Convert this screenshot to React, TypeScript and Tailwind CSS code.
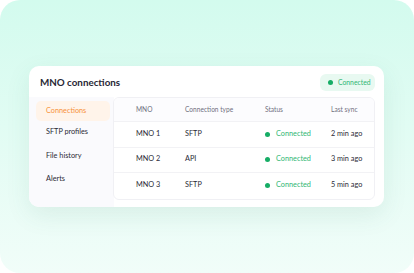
import React from "react";

const rows = [
  { mno: "MNO 1", type: "SFTP", sync: "2 min ago" },
  { mno: "MNO 2", type: "API", sync: "3 min ago" },
  { mno: "MNO 3", type: "SFTP", sync: "5 min ago" },
];

const nav = ["Connections", "SFTP profiles", "File history", "Alerts"];

export default function App() {
  return (
    <div className="w-[414px] h-[273px] bg-white" style={{ fontFamily: "Lato, 'Noto Sans', sans-serif" }}>
      <div className="w-[414px] h-[273px] rounded-[20px] bg-gradient-to-b from-[#d3fbee] to-[#f1fdf9] pt-[66px] pl-[29px]">
        <div className="w-[355px] h-[141px] rounded-[10px] bg-white shadow-[0_8px_24px_rgba(60,120,100,0.10)] flex flex-col overflow-hidden">
          <div className="h-[31px] pt-[2px] flex items-center justify-between pl-[11px] pr-[9px]">
            <div className="text-[9.8px] font-bold text-[#272735] leading-none">MNO connections</div>
            <div className="h-[17px] w-[55px] rounded-[6px] bg-[#e8f9f1] flex items-center pl-[8px] gap-[5px]">
              <span className="w-[5px] h-[5px] rounded-full bg-[#16ad66]" />
              <span className="text-[6.8px] text-[#2fb774] leading-none">Connected</span>
            </div>
          </div>
          <div className="flex flex-1">
            <div className="w-[85px] pl-[7px] pt-[4px] bg-[#fafafd] flex flex-col">
              {nav.map((n, i) => (
                <div
                  key={n}
                  className={
                    i === 0
                      ? "w-[74px] h-[20px] rounded-[5px] bg-[#fff4ea] text-[#f7923a] text-[7.3px] flex items-center pl-[10px]"
                      : "w-[74px] h-[23.5px] text-[#2a2a36] text-[7.3px] flex items-center pl-[10px]"
                  }
                >
                  {n}
                </div>
              ))}
            </div>
            <div className="w-[262px] ml-[-1px]">
              <div className="rounded-[6px] border border-[#f0f0f4] bg-white overflow-hidden">
                <div className="h-[24px] flex items-center bg-[#fcfcfe] text-[6.6px] text-[#70707e] border-b border-[#f2f2f5]">
                  <div className="w-[71px] pl-[22px]">MNO</div>
                  <div className="w-[80px]">Connection type</div>
                  <div className="w-[66px]">Status</div>
                  <div>Last sync</div>
                </div>
                {rows.map((r, i) => (
                  <div
                    key={r.mno}
                    className={
                      "h-[25.5px] flex items-center text-[7.3px] text-[#2a2a36]" +
                      (i < 2 ? " border-b border-[#f2f2f5]" : "")
                    }
                  >
                    <div className="w-[71px] pl-[22px]">{r.mno}</div>
                    <div className="w-[80px]">{r.type}</div>
                    <div className="w-[66px] flex items-center gap-[6px]">
                      <span className="w-[5px] h-[5px] rounded-full bg-[#16ad66]" />
                      <span className="text-[#2fb774]">Connected</span>
                    </div>
                    <div>{r.sync}</div>
                  </div>
                ))}
              </div>
            </div>
          </div>
        </div>
      </div>
    </div>
  );
}
